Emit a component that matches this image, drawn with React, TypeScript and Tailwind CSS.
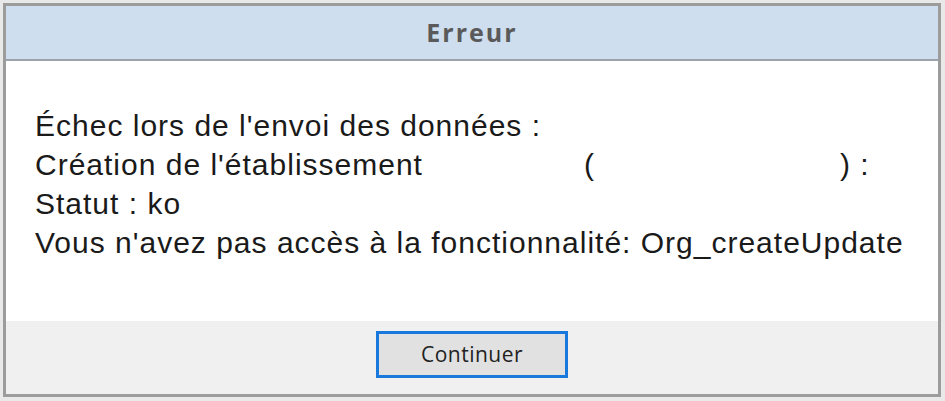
export default function App() {
  return (
    <div className="w-[945px] h-[401px] bg-[#e9e9e9] pt-[3px] pl-[3px]" style={{ fontFamily: '"Liberation Sans", Arial, sans-serif' }}>
      <div className="w-[938px] h-[394px] border-[3px] border-[#9c9c9c] flex flex-col bg-white">
        <div className="h-[55px] bg-[#cfdeee] border-b-[2px] border-[#9aa3ad] flex items-center justify-center">
          <span className="text-[25px] font-bold text-[#5a5a5a] tracking-[2px]" style={{ fontFamily: '"Open Sans", sans-serif' }}>
            Erreur
          </span>
        </div>
        <div className="flex-1 bg-white pl-[29px] pt-[45px] text-[30px] leading-[39px] tracking-[1px] text-[#1a1a1a]">
          <div>Échec lors de l'envoi des données :</div>
          <div className="flex">
            <span>Création de l'établissement</span>
            <span className="ml-[161px]">(</span>
            <span className="ml-[245px]">) :</span>
          </div>
          <div>Statut : ko</div>
          <div>Vous n'avez pas accès à la fonctionnalité: Org_createUpdate</div>
        </div>
        <div className="h-[73px] bg-[#f0f0f0] flex justify-center pt-[10px]">
          <button className="w-[192px] h-[47px] border-[3px] border-[#1878dc] bg-[#e1e1e1] text-[21px] tracking-[0.5px] text-[#222]" style={{ fontFamily: '"Open Sans", sans-serif' }}>
            Continuer
          </button>
        </div>
      </div>
    </div>
  );
}
